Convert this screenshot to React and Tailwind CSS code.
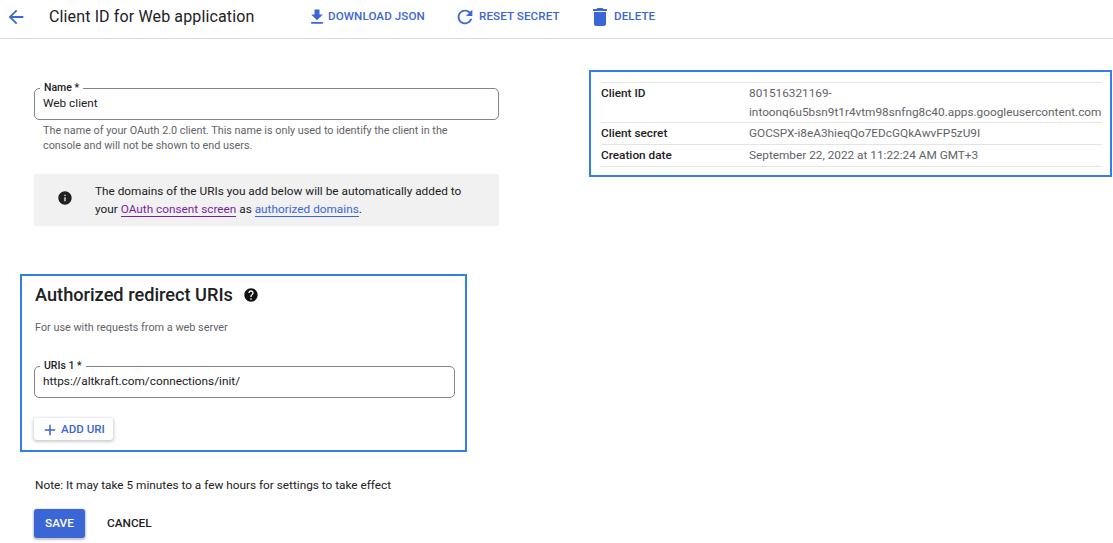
const BLUE = "text-[#3b66d5]";
const Ic = ({ d, size = 24, className = "" }) => (
  <svg width={size} height={size} viewBox="0 0 24 24" fill="currentColor" className={className}><path d={d} /></svg>
);
const Field = ({ label, value, className = "" }) => (
  <div className={"relative h-[32px] rounded-[5px] border border-[#80868b] flex items-center pl-[8px] pb-[1px] text-[11.8px] text-[#202124] " + className}>
    <span className="absolute left-[5px] top-[-8px] bg-white px-[4px] text-[10.5px] leading-[13px] font-medium text-[#202124]">{label}</span>
    {value}
  </div>
);
const Row = ({ label, children, className = "" }) => (
  <div className={"flex border-b border-[#e4e4e4] text-[11.8px] " + className}>
    <div className="w-[148px] shrink-0 font-medium text-[#202124]">{label}</div>
    <div className="flex-1 whitespace-nowrap text-[#5f6368]">{children}</div>
  </div>
);
export default function App() {
  return (
    <div className="w-[1113px] h-[543px] overflow-hidden bg-white font-['Roboto',sans-serif]">
      <header className="h-[39px] border-b border-[#dadce0] flex items-center pb-[5px]">
        <Ic className={"ml-[5px] " + BLUE} size={22} d="M20 11H7.83l5.59-5.59L12 4l-8 8 8 8 1.41-1.41L7.83 13H20v-2z" />
        <h1 className="ml-[22px] w-[258px] text-[16px] tracking-[0.13px] text-[#202124]">Client ID for Web application</h1>
        <div className={"mt-[1px] flex items-center text-[11.6px] font-medium tracking-[0.1px] " + BLUE}>
          <Ic size={20} d="M19 9h-4V3H9v6H5l7 7 7-7zM5 18v2h14v-2H5z" />
          <span className="ml-[1px] w-[126px]">DOWNLOAD JSON</span>
          <Ic size={22} d="M17.65 6.35C16.2 4.9 14.21 4 12 4c-4.42 0-7.99 3.58-7.99 8s3.57 8 7.99 8c3.73 0 6.84-2.55 7.73-6h-2.08c-.82 2.33-3.04 4-5.65 4-3.31 0-6-2.69-6-6s2.69-6 6-6c1.66 0 3.14.69 4.22 1.78L13 11h7V4l-2.35 2.35z" />
          <span className="ml-[3px] w-[109px]">RESET SECRET</span>
          <Ic size={24} d="M6 19c0 1.1.9 2 2 2h8c1.1 0 2-.9 2-2V7H6v12zM19 4h-3.5l-1-1h-5l-1 1H5v2h14V4z" />
          <span className="ml-[2px]">DELETE</span>
        </div>
      </header>
      <main className="flex items-start">
        <div className="w-[589px] shrink-0">
          <div className="ml-[34px] w-[465px] mt-[49px]">
            <Field label="Name *" value="Web client" />
            <p className="mt-[3px] pl-[9px] pr-[30px] text-[10.82px] leading-[15px] text-[#5f6368]">The name of your OAuth 2.0 client. This name is only used to identify the client in the console and will not be shown to end users.</p>
            <div className="mt-[21px] h-[52px] rounded-[3px] bg-[#f1f1f1] flex items-center text-[11.8px] leading-[18.5px] text-[#202124]">
              <Ic size={16} className="ml-[23px] mb-[4px] shrink-0" d="M12 2C6.48 2 2 6.48 2 12s4.48 10 10 10 10-4.48 10-10S17.52 2 12 2zm1 15h-2v-6h2v6zm0-8h-2V7h2v2z" />
              <p className="ml-[22px]">The domains of the URIs you add below will be automatically added to<br />your <a className="text-[#7b1fa2] border-b border-[#7b1fa2]">OAuth consent screen</a> as <a className="text-[#3b66d5] border-b border-[#3b66d5]">authorized domains</a>.</p>
            </div>
          </div>
          <section className="ml-[20px] mt-[48px] w-[447px] h-[178px] border-2 border-[#2f80ed] pl-[12px] pr-[10px]">
            <div className="flex items-center h-[37px] pl-[1px]">
              <h2 className="text-[18.2px] font-medium text-[#202124] leading-[37px]">Authorized redirect URIs</h2>
              <Ic size={16} className="ml-[10px] text-[#111]" d="M12 2C6.48 2 2 6.48 2 12s4.48 10 10 10 10-4.48 10-10S17.52 2 12 2zm1 17h-2v-2h2v2zm2.07-7.75l-.9.92C13.45 12.9 13 13.5 13 15h-2v-.5c0-1.1.45-2.1 1.17-2.83l1.24-1.26c.37-.36.59-.86.59-1.41 0-1.1-.9-2-2-2s-2 .9-2 2H8c0-2.21 1.79-4 4-4s4 1.79 4 4c0 .88-.36 1.68-.93 2.25z" />
            </div>
            <p className="mt-[7px] pl-[1px] text-[10.85px] leading-[15px] text-[#5f6368]">For use with requests from a web server</p>
            <Field label="URIs 1 *" value="https://altkraft.com/connections/init/" className="mt-[31px]" />
            <button className={"mt-[20px] h-[22px] w-[79px] rounded-[3px] bg-white shadow-[0_1px_3px_1px_rgba(60,64,67,0.25)] flex items-center pt-[1px] text-[11.6px] font-medium " + BLUE}>
              <Ic size={18} className="ml-[7px]" d="M19 13h-6v6h-2v-6H5v-2h6V5h2v6h6v2z" />
              <span className="ml-[2px]">ADD URI</span>
            </button>
          </section>
          <p className="ml-[35px] mt-[26px] text-[11.8px] leading-[15px] text-[#202124]">Note: It may take 5 minutes to a few hours for settings to take effect</p>
          <div className="ml-[34px] mt-[16px] flex items-center text-[11.8px] font-medium">
            <button className="w-[51px] h-[29px] rounded-[3px] bg-[#3b66d5] text-white shadow-[0_1px_2px_1px_rgba(60,64,67,0.3)]">SAVE</button>
            <button className="ml-[22px] text-[#202124]">CANCEL</button>
          </div>
        </div>
        <aside className="mt-[31px] w-[523px] h-[107px] border-2 border-[#2f80ed] pl-[10px] pr-[8px] pt-[10px]">
          <div className="border-t border-[#e4e4e4]">
            <Row label="Client ID" className="pt-[1px] pb-[1px] leading-[18.5px]">801516321169-<br />intoonq6u5bsn9t1r4vtm98snfng8c40.apps.googleusercontent.com</Row>
            <Row label="Client secret" className="pt-[1px] pb-[1px] leading-[19px]">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</Row>
            <Row label="Creation date" className="pt-[1px] pb-[1px] leading-[19px]">September 22, 2022 at 11:22:24 AM GMT+3</Row>
          </div>
        </aside>
      </main>
    </div>
  );
}
